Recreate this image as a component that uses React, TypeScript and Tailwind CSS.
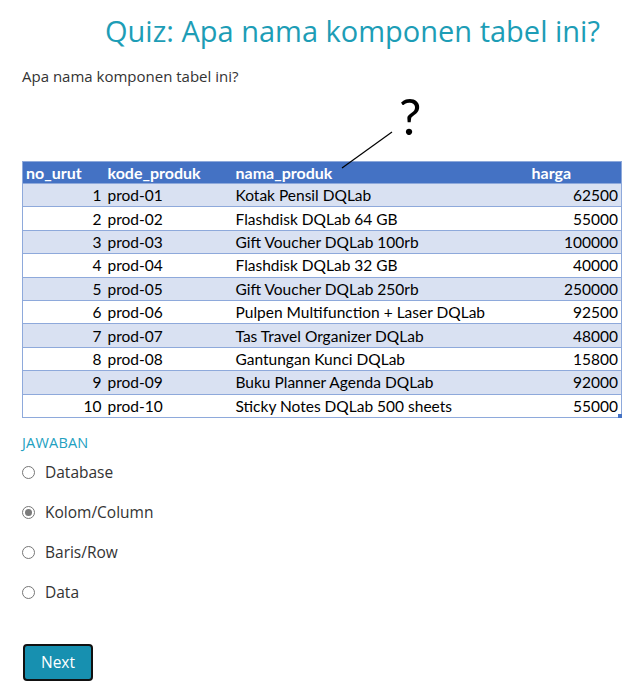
import React from "react";

const rows = [
	[1, "prod-01", "Kotak Pensil DQLab", 62500],
	[2, "prod-02", "Flashdisk DQLab 64 GB", 55000],
	[3, "prod-03", "Gift Voucher DQLab 100rb", 100000],
	[4, "prod-04", "Flashdisk DQLab 32 GB", 40000],
	[5, "prod-05", "Gift Voucher DQLab 250rb", 250000],
	[6, "prod-06", "Pulpen Multifunction + Laser DQLab", 92500],
	[7, "prod-07", "Tas Travel Organizer DQLab", 48000],
	[8, "prod-08", "Gantungan Kunci DQLab", 15800],
	[9, "prod-09", "Buku Planner Agenda DQLab", 92000],
	[10, "prod-10", "Sticky Notes DQLab 500 sheets", 55000],
] as const;

const options = ["Database", "Kolom/Column", "Baris/Row", "Data"];

function Radio({ checked }: { checked?: boolean }) {
	return (
		<span className="w-[13px] h-[13px] rounded-full border border-[#767676] bg-white flex items-center justify-center shrink-0">
			{checked && <span className="w-[7px] h-[7px] rounded-full bg-[#7a7a7a]" />}
		</span>
	);
}

export default function App() {
	return (
		<div className="w-[643px] h-[699px] bg-white font-['Open_Sans',sans-serif] text-[#333]">
			{/* Title */}
			<h1 className="pt-[7px] pl-[62px] text-center text-[29px] leading-[48px] font-medium text-[#1d9db6]">
				Quiz: Apa nama komponen tabel ini?
			</h1>

			<p className="mt-[11px] ml-[22px] text-[15px] leading-[20px] text-[#333]">
				Apa nama komponen tabel ini?
			</p>

			{/* Table picture */}
			<div className="relative ml-[22px] mt-[75px] w-[600px] font-['Lato',sans-serif] text-[15.5px] leading-[20px] text-black">
				<span className="absolute left-[377px] top-[-72px] text-[50px] leading-[54px] font-['Lato',sans-serif]">
					?
				</span>
				<svg className="absolute left-0 top-[-40px] overflow-visible" width="600" height="60">
					<line x1="320" y1="47" x2="370" y2="11" stroke="#000" strokeWidth="1.2" />
				</svg>
				<table className="w-[600px] border-collapse border border-[#8ea9db]">
					<thead>
						<tr className="bg-[#4472c4] text-white font-bold h-[22px]">
							<th className="w-[79px] text-left pl-[3px] font-bold text-[16px]">no_urut</th>
							<th className="w-[131px] text-left pl-[6px] font-bold text-[16px]">kode_produk</th>
							<th className="w-[296px] text-left pl-[3px] font-bold text-[16px]">nama_produk</th>
							<th className="text-left pl-[3px] font-bold text-[16px]">harga</th>
						</tr>
					</thead>
					<tbody>
						{rows.map((r, i) => (
							<tr
								key={r[0]}
								className={`h-[23.4px] border-t border-[#8ea9db] ${i % 2 === 0 ? "bg-[#d9e1f2]" : "bg-white"}`}
							>
								<td className="text-right pr-0">{r[0]}</td>
								<td className="pl-[6px]">{r[1]}</td>
								<td className="pl-[3px]">{r[2]}</td>
								<td className="text-right pr-[3px]">{r[3]}</td>
							</tr>
						))}
					</tbody>
				</table>
				<span className="absolute right-0 bottom-0 w-[4px] h-[4px] bg-[#4472c4]" />
			</div>

			{/* Answers */}
			<div className="ml-[22px] mt-[16px]">
				<p className="text-[14.5px] leading-[18px] text-[#22a0bf] tracking-[0.2px]">JAWABAN</p>
				<div className="mt-[12px] flex flex-col gap-[22px]">
					{options.map((o) => (
						<label key={o} className="flex items-center gap-[10px] h-[18px] text-[15.5px] text-[#333]">
							<Radio checked={o === "Kolom/Column"} />
							{o}
						</label>
					))}
				</div>
				<button className="mt-[42px] ml-px w-[70px] h-[37px] rounded-[4px] border-2 border-[#111] bg-[#1790b0] text-white text-[15.5px]">
					Next
				</button>
			</div>
		</div>
	);
}
